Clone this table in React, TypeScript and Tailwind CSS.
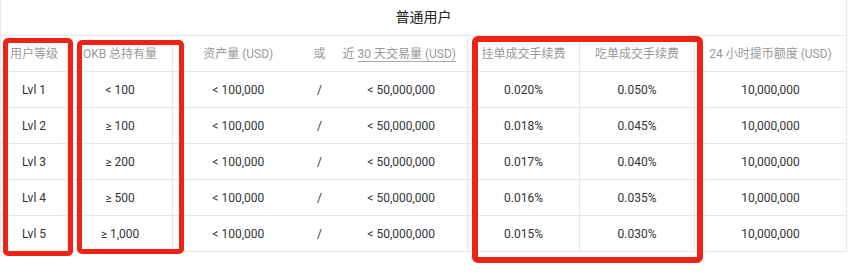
import React from "react";

const rows = [
  { lvl: "Lvl 1", okb: "< 100", maker: "0.020%", taker: "0.050%" },
  { lvl: "Lvl 2", okb: "≥ 100", maker: "0.018%", taker: "0.045%" },
  { lvl: "Lvl 3", okb: "≥ 200", maker: "0.017%", taker: "0.040%" },
  { lvl: "Lvl 4", okb: "≥ 500", maker: "0.016%", taker: "0.035%" },
  { lvl: "Lvl 5", okb: "≥ 1,000", maker: "0.015%", taker: "0.030%" },
];

const font = {
  fontFamily: '"Roboto", "Noto Sans CJK SC", sans-serif',
};

export default function App() {
  return (
    <div className="relative w-[850px] h-[274px] bg-white overflow-hidden" style={font}>
      <div className="w-[847px] border-l border-[#e8e8e8] text-[12px]">
        <div className="h-[36px] border-b border-r border-[#e8e8e8] flex items-center justify-center text-[14px] text-[#222]">
          普通用户
        </div>
        <div className="flex h-[36px] border-b border-[#e8e8e8] text-[#999]">
          <div className="w-[67px] border-r border-[#e8e8e8] flex items-center justify-center">用户等级</div>
          <div className="w-[105px] border-r border-[#e8e8e8] flex items-center justify-center">OKB 总持有量</div>
          <div className="w-[295px] border-r border-[#e8e8e8] flex">
            <div className="w-[131px] flex items-center justify-center">资产量 (USD)</div>
            <div className="w-[32px] flex items-center justify-center">或</div>
            <div className="w-[132px] flex items-center justify-center pr-[4px]">
              <span>近 </span>
              <span className="underline decoration-[#aaa] underline-offset-[3px] ml-[3px]">30 天交易量 (USD)</span>
            </div>
          </div>
          <div className="w-[112px] border-r border-[#e8e8e8] flex items-center justify-center">挂单成交手续费</div>
          <div className="w-[115px] border-r border-[#e8e8e8] flex items-center justify-center">吃单成交手续费</div>
          <div className="w-[152px] border-r border-[#e8e8e8] flex items-center justify-center">24 小时提币额度 (USD)</div>
        </div>
        {rows.map((r) => (
          <div key={r.lvl} className="flex h-[36px] border-b border-[#e8e8e8] text-[#333]">
            <div className="w-[67px] border-r border-[#e8e8e8] flex items-center justify-center">{r.lvl}</div>
            <div className="w-[105px] border-r border-[#e8e8e8] flex items-center justify-center">{r.okb}</div>
            <div className="w-[295px] border-r border-[#e8e8e8] flex">
              <div className="w-[131px] flex items-center justify-center">&lt; 100,000</div>
              <div className="w-[32px] flex items-center justify-center">/</div>
              <div className="w-[132px] flex items-center justify-center">&lt; 50,000,000</div>
            </div>
            <div className="w-[112px] border-r border-[#e8e8e8] flex items-center justify-center">{r.maker}</div>
            <div className="w-[115px] border-r border-[#e8e8e8] flex items-center justify-center">{r.taker}</div>
            <div className="w-[152px] border-r border-[#e8e8e8] flex items-center justify-center">10,000,000</div>
          </div>
        ))}
      </div>
      <div className="absolute left-[3px] top-[38px] w-[70px] h-[218px] border-[5px] border-[#ef2218] rounded-[5px]" />
      <div className="absolute left-[77px] top-[40px] w-[107px] h-[214px] border-[5px] border-[#ef2218] rounded-[5px]" />
      <div className="absolute left-[472px] top-[36px] w-[231px] h-[227px] border-[6px] border-[#ef2218] rounded-[6px]" />
    </div>
  );
}
